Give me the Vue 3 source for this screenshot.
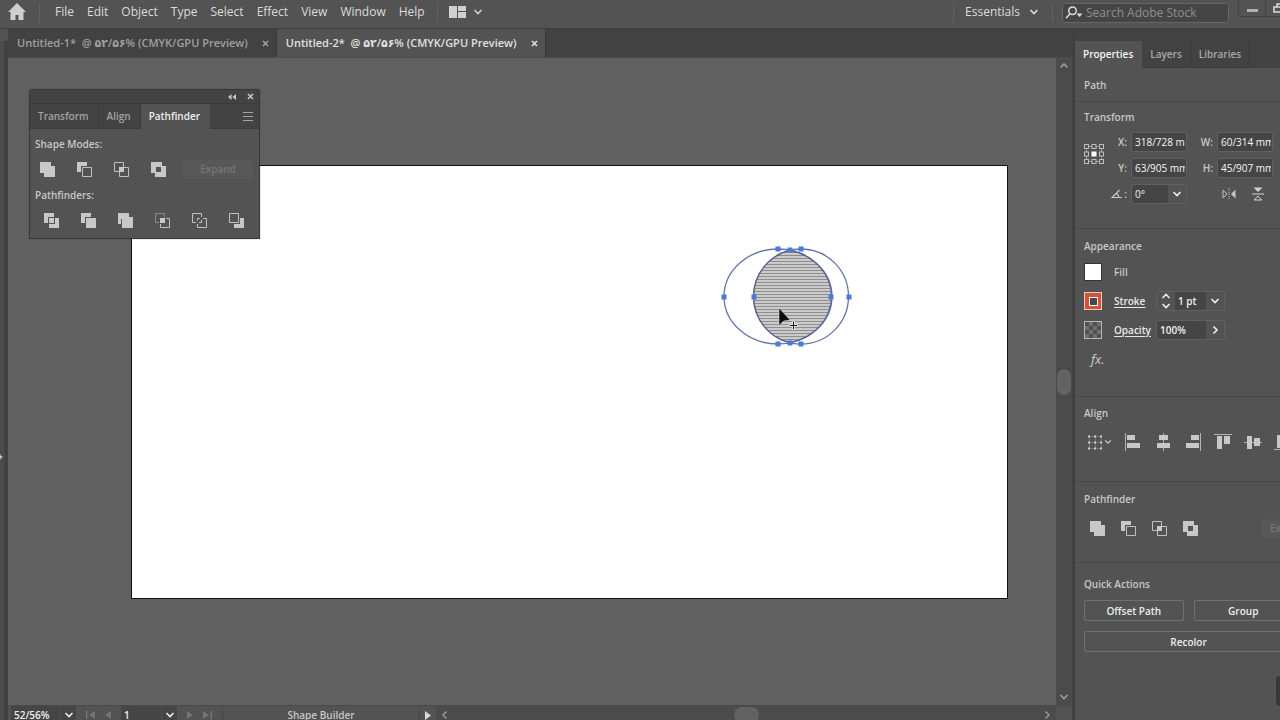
<template>
  <div class="app">
    <header class="menu-bar">
      <button class="home" aria-label="Home">
        <svg width="20" height="18" viewBox="0 0 20 18" fill="currentColor">
          <path d="M10 0L1 9h2.500v8h5v-5h3v5h5V9H19z" />
        </svg>
      </button>
      <span class="separator"></span>
      <nav class="menus">
        <button v-for="menu in menus" :key="menu">{{ menu }}</button>
      </nav>
      <span class="separator"></span>
      <button class="arrange" aria-label="Arrange documents">
        <svg width="17" height="12" viewBox="0 0 17 12" fill="currentColor">
          <path d="M0 0h8v12H0zM9 0h8v5H9zM9 6h8v6H9z" />
        </svg>
        <svg class="chevron" viewBox="0 0 10 10"><path d="M1.500 3L5 6.500 8.500 3" /></svg>
      </button>
      <span class="spacer"></span>
      <span class="separator"></span>
      <button class="workspace-switch">
        Essentials
        <svg class="chevron" viewBox="0 0 10 10"><path d="M1.500 3L5 6.500 8.500 3" /></svg>
      </button>
      <span class="separator"></span>
      <label class="search">
        <svg width="18" height="14" viewBox="0 0 18 14" fill="none" stroke="currentColor" stroke-width="1.500">
          <circle cx="7.500" cy="4.800" r="3.800" />
          <path d="M5 7.800L1 12.200" />
          <path d="M11.500 7.500h6L14.500 11z" fill="currentColor" stroke="none" />
        </svg>
        <input type="text" placeholder="Search Adobe Stock" aria-label="Search Adobe Stock" />
      </label>
      <div class="window-buttons">
        <button aria-label="Minimize"><span class="dash"></span></button>
        <button aria-label="Restore">
          <svg width="12" height="10" viewBox="0 0 12 10" fill="none" stroke="currentColor" stroke-width="1.500">
            <path d="M1 4h7v5H1zM4 4V1h7v5H8" />
          </svg>
        </button>
      </div>
    </header>

    <div class="main">
      <aside class="tool-edge">
        <svg class="edge-mark" width="3" height="8" viewBox="0 0 3 8"><path d="M0 1l1 2 2 1-2 1-1 2z" fill="#d0d0d0" /></svg>
      </aside>

      <section class="document">
        <div class="doc-tabs">
          <div
            v-for="doc in documents"
            :key="doc.name"
            class="doc-tab"
            :class="{ active: doc.name === activeDoc }"
          >
            <button class="doc-name" @click="activeDoc = doc.name">{{ doc.name }}*&nbsp; @ ۵۲/۵۶% (CMYK/GPU Preview)</button>
            <button class="doc-close" aria-label="Close document">
              <svg width="7" height="7" viewBox="0 0 7 7"><path d="M1 1l5 5M6 1L1 6" /></svg>
            </button>
          </div>
        </div>

        <div class="stage">
          <div class="canvas">
            <div class="artboard">
              <svg class="artwork" width="134" height="103" viewBox="720 245 134 103">
                <defs>
                  <pattern id="hatch" width="4" height="3" patternUnits="userSpaceOnUse">
                    <rect width="4" height="3" fill="#cbcbcb" />
                    <rect width="4" height="1" fill="#8e8e8e" />
                  </pattern>
                </defs>
                <path :d="lens" fill="url(#hatch)" />
                <g fill="none" stroke="#6674ab" stroke-width="1.300">
                  <ellipse cx="778" cy="296.500" rx="54" ry="47.500" />
                  <circle cx="801" cy="296.500" r="47.500" />
                </g>
                <path :d="lens" fill="none" stroke="#54577f" />
                <rect
                  v-for="[x, y] in anchors"
                  :key="`${x}-${y}`"
                  :x="x - 2.5"
                  :y="y - 2.5"
                  width="5"
                  height="5"
                  fill="#4b7bd8"
                />
                <path d="M779 308v17.500l4.500-4.500 6.500-1z" fill="#0a0a0a" stroke="#d8d8d8" stroke-width=".5" />
                <path d="M793.500 321.500v8M789.500 325.500h8" stroke="#e6e6e6" stroke-width="3" />
                <path d="M793.500 322v7M790 325.500h7" stroke="#111" />
              </svg>
            </div>

            <div class="float-panel">
              <div class="float-title">
                <button aria-label="Collapse panel">
                  <svg width="8" height="6" viewBox="0 0 8 6" fill="currentColor"><path d="M3.500 0v6L0 3zM8 0v6L4.500 3z" /></svg>
                </button>
                <button aria-label="Close panel">
                  <svg class="cross" width="7" height="7" viewBox="0 0 7 7"><path d="M1 1l5 5M6 1L1 6" /></svg>
                </button>
              </div>
              <div class="float-tabs">
                <button
                  v-for="tab in floatTabs"
                  :key="tab"
                  :class="{ active: tab === activeFloatTab }"
                  @click="activeFloatTab = tab"
                >
                  {{ tab }}
                </button>
                <button class="panel-menu" aria-label="Panel menu">
                  <svg width="10" height="9" viewBox="0 0 10 9" fill="currentColor"><path d="M0 0h10v1H0zM0 4h10v1H0zM0 8h10v1H0z" /></svg>
                </button>
              </div>
              <div class="float-body">
                <h3>Shape Modes:</h3>
                <div class="icon-row modes">
                  <button v-for="icon in shapeModes" :key="icon.name" :aria-label="icon.name">
                    <svg class="path-icon" viewBox="0 0 15 15">
                      <path class="line" :d="icon.line" />
                      <path class="solid" :d="icon.solid" />
                    </svg>
                  </button>
                  <button class="expand" disabled>Expand</button>
                </div>
                <h3>Pathfinders:</h3>
                <div class="icon-row finders">
                  <button v-for="icon in pathfinders" :key="icon.name" :aria-label="icon.name">
                    <svg class="path-icon" viewBox="0 0 15 15">
                      <path class="faint" :d="icon.faint" />
                      <path class="line" :d="icon.line" />
                      <path class="solid" :d="icon.solid" />
                    </svg>
                  </button>
                </div>
              </div>
            </div>
          </div>

          <div class="scroll-y">
            <button aria-label="Scroll up">
              <svg class="chevron" viewBox="0 0 10 10"><path d="M1.500 6.500L5 3l3.500 3.500" /></svg>
            </button>
            <span class="thumb"></span>
            <button aria-label="Scroll down">
              <svg class="chevron" viewBox="0 0 10 10"><path d="M1.500 3L5 6.500 8.500 3" /></svg>
            </button>
          </div>
        </div>

        <footer class="status-bar">
          <div class="combo zoom">
            <input type="text" v-model="zoom" aria-label="Zoom" />
            <button aria-label="Zoom levels">
              <svg class="chevron" viewBox="0 0 10 10"><path d="M1.500 3L5 6.500 8.500 3" /></svg>
            </button>
          </div>
          <div class="nav">
            <button aria-label="First artboard"><svg width="9" height="8" viewBox="0 0 9 8"><path d="M0 0h1.500v8H0zM9 0v8L3 4z" /></svg></button>
            <button aria-label="Previous artboard"><svg width="6" height="8" viewBox="0 0 6 8"><path d="M6 0v8L0 4z" /></svg></button>
          </div>
          <div class="combo board">
            <input type="text" v-model="artboard" aria-label="Artboard" />
            <button aria-label="Artboard list">
              <svg class="chevron" viewBox="0 0 10 10"><path d="M1.500 3L5 6.500 8.500 3" /></svg>
            </button>
          </div>
          <div class="nav">
            <button aria-label="Next artboard"><svg width="6" height="8" viewBox="0 0 6 8"><path d="M0 0v8l6-4z" /></svg></button>
            <button aria-label="Last artboard"><svg width="9" height="8" viewBox="0 0 9 8"><path d="M7.500 0H9v8H7.500zM0 0v8l6-4z" /></svg></button>
          </div>
          <span class="tool-name">Shape Builder</span>
          <button class="status-play" aria-label="Status options">
            <svg width="6" height="9" viewBox="0 0 6 9" fill="currentColor"><path d="M0 0v9l6-4.500z" /></svg>
          </button>
          <div class="scroll-x">
            <button aria-label="Scroll left">
              <svg class="chevron" viewBox="0 0 10 10"><path d="M6.500 1.500L3 5l3.500 3.500" /></svg>
            </button>
            <span class="thumb"></span>
            <button aria-label="Scroll right">
              <svg class="chevron" viewBox="0 0 10 10"><path d="M3.500 1.500L7 5 3.500 8.500" /></svg>
            </button>
          </div>
          <span class="corner"></span>
        </footer>
      </section>

      <aside class="side">
        <div class="side-tabs">
          <button
            v-for="tab in sideTabs"
            :key="tab"
            :class="{ active: tab === activeSideTab }"
            @click="activeSideTab = tab"
          >
            {{ tab }}
          </button>
        </div>
        <div class="side-body">
          <section class="path"><h2>Path</h2></section>

          <section class="transform">
            <h2>Transform</h2>
            <div class="transform-grid">
              <svg class="reference-point" width="20" height="20" viewBox="0 0 20 20">
                <path d="M2.500 2.500h15v15h-15z" fill="none" stroke="#bdbdbd" stroke-dasharray="2 1" />
                <rect
                  v-for="[x, y] in refPoints"
                  :key="`${x}-${y}`"
                  :x="x"
                  :y="y"
                  width="4"
                  height="4"
                  fill="#535353"
                  stroke="#bdbdbd"
                />
                <rect x="7.500" y="7.500" width="5" height="5" fill="#fff" />
              </svg>
              <div class="fields">
                <div class="field" v-for="field in fields" :key="field.id">
                  <label :for="field.id">{{ field.label }}:</label>
                  <input :id="field.id" type="text" v-model="field.value" />
                </div>
                <div class="field">
                  <label for="angle" aria-label="Rotate">
                    <svg width="12" height="10" viewBox="0 0 12 10" fill="none" stroke="currentColor" stroke-width="1.200">
                      <path d="M8.500 1L1 8.500h10M5.500 4.500c1.500.8 2.300 2 2.300 4" />
                    </svg>:
                  </label>
                  <div class="combo angle">
                    <input id="angle" type="text" v-model="angle" />
                    <button aria-label="Angle presets">
                      <svg class="chevron" viewBox="0 0 10 10"><path d="M1.500 3L5 6.500 8.500 3" /></svg>
                    </button>
                  </div>
                </div>
                <div class="flips">
                  <button aria-label="Flip horizontally">
                    <svg width="14" height="12" viewBox="0 0 14 12">
                      <path d="M1 2.200v7.600L5 6z" fill="none" stroke="#c4c4c4" />
                      <path d="M7 0v12" stroke="#c4c4c4" stroke-dasharray="1 1" />
                      <path d="M13.500 1.500v9L9 6z" fill="#c4c4c4" />
                    </svg>
                  </button>
                  <button aria-label="Flip vertically">
                    <svg width="12" height="14" viewBox="0 0 12 14">
                      <path d="M1.500.5h9L6 5z" fill="#d4d4d4" />
                      <path d="M0 7h12" stroke="#d4d4d4" />
                      <path d="M2.200 13h7.600L6 9z" fill="none" stroke="#d4d4d4" />
                    </svg>
                  </button>
                </div>
              </div>
            </div>
          </section>

          <section class="appearance">
            <h2>Appearance</h2>
            <div class="look-rows">
              <div class="look-row">
                <button class="swatch fill" aria-label="Fill color"></button>
                <span class="look-name">Fill</span>
              </div>
              <div class="look-row">
                <button class="swatch stroke" aria-label="Stroke color"><span></span></button>
                <a href="#" class="look-name">Stroke</a>
                <div class="combo weight">
                  <button class="stepper" aria-label="Step stroke weight">
                    <svg width="10" height="16" viewBox="0 0 10 16"><path d="M1.500 5L5 1.500 8.500 5M1.500 11L5 14.500 8.500 11" /></svg>
                  </button>
                  <input type="text" v-model="strokeWeight" aria-label="Stroke weight" />
                  <button aria-label="Stroke weights">
                    <svg class="chevron" viewBox="0 0 10 10"><path d="M1.500 3L5 6.500 8.500 3" /></svg>
                  </button>
                </div>
              </div>
              <div class="look-row">
                <button class="swatch checker" aria-label="Transparency"></button>
                <a href="#" class="look-name">Opacity</a>
                <div class="combo opacity">
                  <input type="text" v-model="opacity" aria-label="Opacity" />
                  <button aria-label="Opacity slider">
                    <svg class="chevron" viewBox="0 0 10 10"><path d="M3.500 1.500L7 5 3.500 8.500" /></svg>
                  </button>
                </div>
              </div>
              <button class="fx">fx<span>.</span></button>
            </div>
          </section>

          <section class="align">
            <h2>Align</h2>
            <div class="align-row">
              <button class="align-to" aria-label="Align to">
                <svg width="15" height="15" viewBox="0 0 15 15">
                  <path d="M1.500 1.500h12v12h-12zM7.500 1.500v12M1.500 7.500h12" fill="none" stroke="#9a9a9a" stroke-dasharray="1 1" />
                  <path d="M0 1.500h3M6 1.500h3M12 1.500h3M0 7.500h3M6 7.500h3M12 7.500h3M0 13.500h3M6 13.500h3M12 13.500h3" stroke="#d0d0d0" stroke-width="2" stroke-dasharray="2 1" />
                </svg>
                <svg class="chevron small" viewBox="0 0 10 10"><path d="M1.500 3L5 6.500 8.500 3" /></svg>
              </button>
              <button v-for="icon in alignIcons" :key="icon.name" :aria-label="icon.name">
                <svg width="18" height="18" viewBox="0 0 18 18">
                  <path :d="icon.line" fill="none" stroke="#b4b4b4" />
                  <path :d="icon.solid" fill="#c8c8c8" />
                </svg>
              </button>
            </div>
          </section>

          <section class="pathfinder">
            <h2>Pathfinder</h2>
            <div class="icon-row">
              <button v-for="icon in shapeModes" :key="icon.name" :aria-label="icon.name">
                <svg class="path-icon" viewBox="0 0 15 15">
                  <path class="line" :d="icon.line" />
                  <path class="solid" :d="icon.solid" />
                </svg>
              </button>
              <button class="expand" disabled>Expand</button>
            </div>
          </section>

          <section class="quick">
            <h2>Quick Actions</h2>
            <div class="quick-grid">
              <button>Offset Path</button>
              <button>Group</button>
              <button class="wide">Recolor</button>
            </div>
          </section>
        </div>
        <span class="edge-handle"></span>
      </aside>
    </div>
  </div>
</template>

<script setup>
import { ref } from 'vue'

const menus = ['File', 'Edit', 'Object', 'Type', 'Select', 'Effect', 'View', 'Window', 'Help']

const documents = [{ name: 'Untitled-1' }, { name: 'Untitled-2' }]
const activeDoc = ref('Untitled-2')

const floatTabs = ['Transform', 'Align', 'Pathfinder']
const activeFloatTab = ref('Pathfinder')

const sideTabs = ['Properties', 'Layers', 'Libraries']
const activeSideTab = ref('Properties')

const zoom = ref('52/56%')
const artboard = ref('1')
const angle = ref('0°')
const strokeWeight = ref('1 pt')
const opacity = ref('100%')

const fields = ref([
  { id: 'pos-x', label: 'X', value: '318/728 mm' },
  { id: 'size-w', label: 'W', value: '60/314 mm' },
  { id: 'pos-y', label: 'Y', value: '63/905 mm' },
  { id: 'size-h', label: 'H', value: '45/907 mm' }
])

// Overlap of the two ellipses
const lens = 'M790 250.3A54 47.5 0 0 1 790 342.7A47.5 47.5 0 0 1 790 250.3Z'

// Anchor points of both ellipses and of their overlap
const anchors = [
  [778, 249], [790, 250], [801, 249],
  [724, 297], [754, 297], [831, 297], [849, 297],
  [778, 344], [790, 343], [801, 344]
]

const refPoints = [
  [0.5, 0.5], [8, 0.5], [15.5, 0.5],
  [0.5, 8], [15.5, 8],
  [0.5, 15.5], [8, 15.5], [15.5, 15.5]
]

const shapeModes = [
  { name: 'Unite', solid: 'M0 0h11v4h4v11H4v-4H0z' },
  { name: 'Minus Front', solid: 'M0 0h10v4H4v6H0z', line: 'M5.5 5.5h9v9h-9z' },
  { name: 'Intersect', solid: 'M5 5h5v5H5z', line: 'M.5.5h9v9h-9zM5.5 5.5h9v9h-9z' },
  { name: 'Exclude', solid: 'M0 0h11v4h4v11H4v-4H0zM5 5v5h5V5z' }
]

const pathfinders = [
  { name: 'Divide', solid: 'M0 0h10v4H4v6H0zM5 5h5v5H5zM11 5h4v10H5v-4h6z' },
  { name: 'Trim', solid: 'M0 0h10v4H4v6H0zM5 5h10v10H5z' },
  { name: 'Merge', solid: 'M0 0h11v4h4v11H4V6H3v5H0z' },
  { name: 'Crop', solid: 'M5 5h5v5H5z', faint: 'M9.5 4V.5h-9v9H4', line: 'M11 5.5h3.5v9h-9V11' },
  { name: 'Outline', line: 'M9.5 4V.5h-9v9H4M11 5.5h3.5v9h-9V11M5.5 8V5.5H8M9.5 7v2.5H7' },
  { name: 'Minus Back', solid: 'M11 5h4v10H5v-4h6z', line: 'M.5.5h9v9h-9z' }
]

const alignIcons = [
  { name: 'Align left', line: 'M1.5 0v18', solid: 'M3 2h8v5H3zM3 10h13v5H3z' },
  { name: 'Align center', line: 'M9.5 0v18', solid: 'M5 2h9v5H5zM3 10h13v5H3z' },
  { name: 'Align right', line: 'M16.5 0v18', solid: 'M7 2h8v5H7zM2 10h13v5H2z' },
  { name: 'Align top', line: 'M0 1.5h18', solid: 'M3 3h5v13H3zM10 3h6v8h-6z' },
  { name: 'Align middle', line: 'M0 9.5h18', solid: 'M3 3h5v13H3zM10 5h6v8h-6z' },
  { name: 'Align bottom', line: 'M0 16.5h18', solid: 'M3 2h5v13H3zM10 7h6v8h-6z' }
]
</script>

<style>
body {
  margin: 0;
  background: #535353;
}
</style>

<style scoped>
* {
  box-sizing: border-box;
}

.app {
  display: flex;
  flex-direction: column;
  height: 100vh;
  overflow: hidden;
  background: #535353;
  color: #c8c8c8;
  font-family: 'Open Sans', 'Noto Sans', 'DejaVu Sans', sans-serif;
  font-size: 10px;
  font-weight: 600;
  line-height: 16px;
}

button,
input {
  margin: 0;
  padding: 0;
  border: none;
  border-radius: 0;
  background: none;
  color: inherit;
  font: inherit;
  outline: none;
}

button {
  display: flex;
  align-items: center;
  justify-content: center;
  flex: none;
  white-space: nowrap;
}

input {
  min-width: 0;
}

svg {
  display: block;
  flex: none;
}

h2,
h3 {
  margin: 0;
  font-size: 10px;
  font-weight: 600;
  line-height: 16px;
}

.chevron {
  width: 10px;
  height: 10px;
  fill: none;
  stroke: currentColor;
  stroke-width: 1.6;
}

/* Menu bar */
.menu-bar {
  display: flex;
  align-items: flex-start;
  flex: none;
  height: 29px;
  border-bottom: 1px solid #3d3d3d;
  color: #dcdcdc;
  font-size: 12px;
  font-weight: 400;
}

.menu-bar > button {
  height: 24px;
}

.home {
  width: 34px;
  color: #cfcfcf;
}

.separator {
  width: 1px;
  height: 20px;
  margin: 3px 5px 0;
  background: #626262;
}

.menus {
  display: flex;
  margin-left: 4px;
}

.menus button {
  height: 24px;
  padding: 0 7px 0 6px;
}

.arrange {
  gap: 7px;
  padding: 0 6px;
  color: #d0d0d0;
}

.spacer {
  flex: 1;
}

.workspace-switch {
  gap: 9px;
  padding: 0 8px 0 6px;
}

.search {
  display: flex;
  align-items: center;
  width: 167px;
  height: 20px;
  margin: 3px 9px 0 4px;
  padding-left: 2px;
  border: 1px solid #666;
  border-radius: 3px;
  background: #454545;
}

.search input {
  flex: 1;
  margin-left: 3px;
}

.search input::placeholder {
  color: #8f8f8f;
  opacity: 1;
}

.window-buttons {
  display: flex;
  width: 42px;
  overflow: hidden;
}

.window-buttons button {
  width: 28px;
  height: 17px;
  border: 1px solid #434343;
  border-top: none;
}

.window-buttons button + button {
  margin-left: -1px;
}

.dash {
  width: 11px;
  height: 3px;
  margin-top: 4px;
  background: #b0b0b0;
}

/* Work area */
.main {
  display: flex;
  flex: 1;
  min-height: 0;
}

.tool-edge {
  display: flex;
  align-items: center;
  flex: none;
  width: 8px;
  margin-top: 12px;
  border-right: 4px solid #414141;
  background: #4c4c4c;
}

.edge-mark {
  margin-top: 152px;
}

.document {
  display: flex;
  flex-direction: column;
  flex: 1;
  min-width: 0;
}

.doc-tabs {
  display: flex;
  flex: none;
  height: 29px;
  border-bottom: 1px solid #4a4a4a;
  background: #424242;
}

.doc-tab {
  display: flex;
  align-items: center;
  gap: 14px;
  padding: 0 7px 0 9px;
  border-right: 1px solid #3a3a3a;
  color: #a0a0a0;
  font-size: 11px;
}

.doc-tab.active {
  background: #535353;
  color: #e0e0e0;
}

.doc-close svg,
.cross {
  fill: none;
  stroke: currentColor;
  stroke-width: 1.6;
}

.stage {
  display: flex;
  flex: 1;
  min-height: 0;
}

.canvas {
  position: relative;
  display: flex;
  flex: 1;
  min-width: 0;
  padding: 107px 48px 106px 123px;
  background: #606060;
}

.artboard {
  position: relative;
  flex: 1;
  border: 1px solid #111;
  background: #fff;
}

.artwork {
  position: absolute;
  top: 79px;
  left: 588px;
}

/* Floating panel */
.float-panel {
  position: absolute;
  top: 31px;
  left: 21px;
  width: 231px;
  border: 1px solid #383838;
  border-radius: 3px 3px 0 0;
  background: #535353;
  box-shadow: 0 0 1px #333;
}

.float-title {
  display: flex;
  align-items: center;
  justify-content: flex-end;
  gap: 11px;
  height: 13px;
  padding-right: 5px;
  background: #434343;
}

.float-tabs {
  display: flex;
  height: 26px;
  border-top: 1px solid #3c3c3c;
  background: #434343;
  color: #a4a4a4;
}

.float-tabs button {
  padding: 0 9px 0 8px;
  border-right: 1px solid #3c3c3c;
  border-bottom: 1px solid #3c3c3c;
}

.float-tabs .active {
  border-color: #535353;
  background: #535353;
  color: #f0f0f0;
}

.float-tabs .panel-menu {
  flex: 1;
  justify-content: flex-end;
  padding-right: 6px;
  border-right: none;
}

.float-body {
  padding: 7px 5px 9px;
}

.icon-row {
  display: flex;
  align-items: center;
}

.path-icon {
  width: 15px;
  height: 15px;
}

.path-icon .solid {
  fill: #c8c8c8;
  fill-rule: evenodd;
}

.path-icon .line {
  fill: none;
  stroke: #c0c0c0;
}

.path-icon .faint {
  fill: none;
  stroke: #8a8a8a;
}

.modes {
  gap: 22px;
  height: 18px;
  margin: 8px 0 9px;
  padding-left: 5px;
}

.finders {
  gap: 22px;
  height: 18px;
  margin-top: 8px;
  padding-left: 9px;
}

.expand {
  width: 70px;
  height: 19px;
  border-radius: 2px;
  background: #585858;
  color: #757575;
}

.modes .expand {
  margin-left: -5px;
}

/* Scroll bars and status bar */
.scroll-y {
  display: flex;
  flex-direction: column;
  align-items: center;
  justify-content: space-between;
  flex: none;
  width: 17px;
  padding: 3px 0;
  border-right: 1px solid #434343;
  background: #4b4b4b;
  color: #a0a0a0;
}

.scroll-y .thumb {
  width: 14px;
  height: 26px;
  border-radius: 7px;
  background: #626262;
}

.status-bar {
  display: flex;
  flex: none;
  height: 15px;
  overflow: hidden;
  border-top: 1px solid #4a4a4a;
  line-height: 18px;
}

.status-bar > *,
.status-bar button,
.status-bar input {
  height: 18px;
}

.combo {
  display: flex;
  border-radius: 2px;
  color: #efefef;
}

.combo input {
  flex: 1;
  padding-left: 3px;
  background: #454545;
}

.combo button {
  width: 16px;
}

.zoom {
  width: 65px;
  margin-left: 3px;
}

.board {
  width: 56px;
}

.status-bar .combo {
  background: #454545;
}

.status-bar .combo button {
  border-left: 1px solid #505050;
}

.nav {
  display: flex;
  align-items: center;
  gap: 10px;
  padding: 0 10px;
}

.nav svg {
  fill: #747474;
}

.tool-name {
  width: 198px;
  border-left: 1px solid #474747;
  border-right: 1px solid #474747;
  text-align: center;
}

.status-play {
  width: 16px;
  color: #d8d8d8;
}

.scroll-x {
  display: flex;
  align-items: center;
  justify-content: space-between;
  flex: 1;
  padding: 0 4px;
  background: #4b4b4b;
  color: #959595;
}

.scroll-x .thumb {
  width: 25px;
  height: 16px;
  border-radius: 8px;
  background: #626262;
}

.corner {
  width: 17px;
  border-right: 1px solid #434343;
}

/* Properties panel */
.side {
  position: relative;
  flex: none;
  width: 207px;
  overflow: hidden;
  border-left: 2px solid #3f3f3f;
}

.side-tabs {
  display: flex;
  height: 39px;
  padding-top: 12px;
  background: #424242;
  color: #a8a8a8;
}

.side-tabs button {
  padding: 0 8px;
  border-right: 1px solid #3c3c3c;
  border-bottom: 1px solid #3c3c3c;
}

.side-tabs .active {
  border-color: #535353;
  background: #535353;
  color: #f4f4f4;
}

.side-body {
  width: 228px;
}

.side-body section {
  padding: 9px 10px 24px 9px;
  border-bottom: 1px solid #474747;
}

.side-body .path {
  padding-bottom: 8px;
}

.side-body .transform {
  padding-top: 7px;
}

.transform-grid {
  display: flex;
  margin-top: 7px;
}

.reference-point {
  margin-top: 12px;
}

.fields {
  display: grid;
  grid-template-columns: 76px 76px;
  gap: 6px 10px;
  margin-left: 7px;
}

.field {
  display: flex;
  align-items: center;
  justify-content: flex-end;
  gap: 4px;
}

.field label {
  display: flex;
  align-items: center;
  gap: 1px;
}

.field input {
  width: 56px;
  height: 20px;
  padding: 0 1px 0 3px;
  border: 1px solid #606060;
  border-radius: 2px;
  background: #454545;
  color: #f6f6f6;
  font-weight: 400;
}

.combo.angle {
  width: 56px;
  border: 1px solid #606060;
}

.combo.angle input {
  height: 18px;
  border: none;
}

.combo.angle button {
  width: 18px;
}

.flips {
  display: flex;
  align-items: center;
  gap: 16px;
  padding-left: 25px;
}

.side-body .appearance {
  padding-bottom: 27px;
}

.look-rows {
  display: flex;
  flex-direction: column;
  align-items: flex-start;
  gap: 9px;
  margin-top: 8px;
}

.look-row {
  display: flex;
  align-items: center;
  height: 20px;
}

.swatch {
  width: 18px;
  height: 18px;
  border: 1px solid #333;
}

.swatch.fill {
  background: #fff;
}

.swatch.stroke {
  border-color: #f0c8bc;
  background: #d4513a;
}

.swatch.stroke span {
  width: 9px;
  height: 9px;
  border: 1px solid #fff;
  background: #484848;
}

.swatch.checker {
  border-color: #b8b8b8;
  background: repeating-conic-gradient(#707070 0 25%, #505050 0 50%) 0 0 / 8px 8px;
}

.look-name {
  width: 34px;
  margin-left: 12px;
  color: #c8c8c8;
  line-height: 13px;
  text-decoration: none;
}

a.look-name {
  color: #e8e8e8;
  text-decoration: underline;
  text-underline-offset: 2px;
}

.look-row .combo {
  width: 69px;
  height: 20px;
  margin-left: 8px;
  border: 1px solid #606060;
}

.look-row .combo button {
  width: 18px;
}

.stepper svg {
  fill: none;
  stroke: currentColor;
  stroke-width: 1.6;
}

.fx {
  height: 20px;
  margin-left: 7px;
  color: #d0d0d0;
  font-size: 13px;
  font-style: italic;
  font-weight: 400;
}

.side-body .align {
  padding-top: 8px;
  padding-bottom: 29px;
}

.align-row {
  display: flex;
  align-items: center;
  gap: 12px;
  height: 20px;
  margin-top: 11px;
}

.align-to {
  margin-left: 4px;
}

.align-to .small {
  width: 8px;
  margin-left: 1px;
}

.pathfinder .icon-row {
  gap: 16px;
  height: 20px;
  margin-top: 11px;
  padding-left: 6px;
}

.pathfinder .expand {
  justify-content: flex-start;
  width: 32px;
  margin-left: 47px;
  padding-left: 9px;
}

.side-body .quick {
  padding-top: 13px;
  border-bottom: none;
}

.quick-grid {
  display: grid;
  grid-template-columns: 1fr 1fr;
  gap: 10px;
  margin-top: 8px;
}

.quick-grid button {
  height: 21px;
  border: 1px solid #707070;
  border-radius: 2px;
  color: #ececec;
}

.quick-grid .wide {
  grid-column: 1 / 3;
}

.edge-handle {
  position: absolute;
  right: 0;
  bottom: 14px;
  width: 4px;
  height: 30px;
  border-radius: 4px 0 0 4px;
  background: #383838;
}
</style>
